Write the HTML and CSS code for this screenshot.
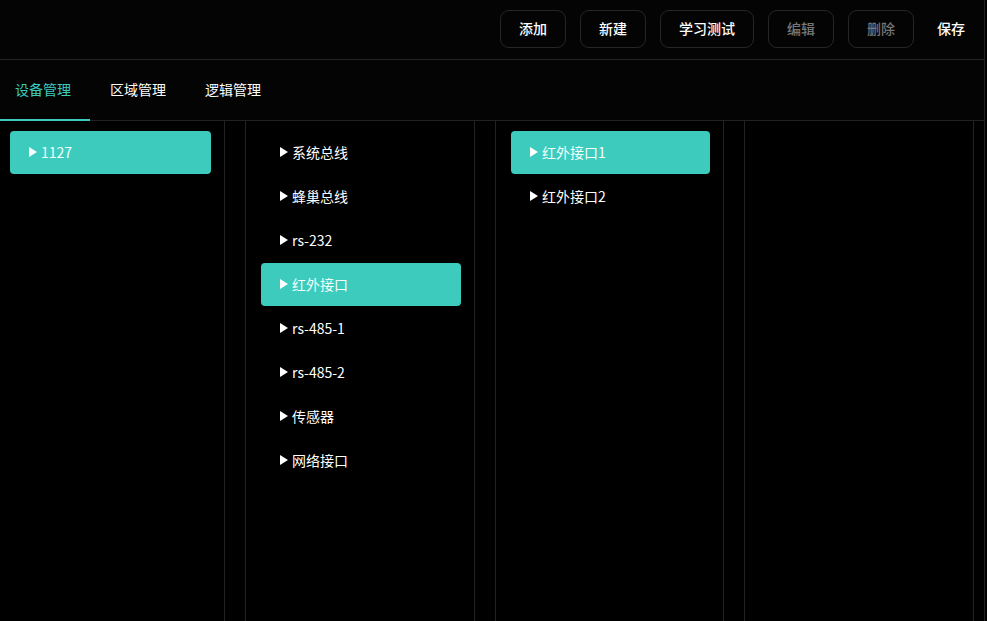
FILE: index.html
```html
<!DOCTYPE html>
<html lang="zh-CN">
<head>
<meta charset="utf-8">
<title>设备管理</title>
<link rel="stylesheet" href="styles.css">
</head>
<body>
<div class="app">
  <header class="toolbar">
    <button class="btn">添加</button>
    <button class="btn">新建</button>
    <button class="btn">学习测试</button>
    <button class="btn btn--disabled">编辑</button>
    <button class="btn btn--disabled">删除</button>
    <button class="btn btn--plain">保存</button>
  </header>
  <nav class="tabs">
    <div class="tab tab--active">设备管理</div>
    <div class="tab">区域管理</div>
    <div class="tab">逻辑管理</div>
  </nav>
  <main class="columns">
    <section class="col col--first">
      <div class="item item--active"><span class="caret"></span>1127</div>
    </section>
    <section class="col">
      <div class="item"><span class="caret"></span>系统总线</div>
      <div class="item"><span class="caret"></span>蜂巢总线</div>
      <div class="item"><span class="caret"></span>rs-232</div>
      <div class="item item--active"><span class="caret"></span>红外接口</div>
      <div class="item"><span class="caret"></span>rs-485-1</div>
      <div class="item"><span class="caret"></span>rs-485-2</div>
      <div class="item"><span class="caret"></span>传感器</div>
      <div class="item"><span class="caret"></span>网络接口</div>
    </section>
    <section class="col col--narrow">
      <div class="item item--active"><span class="caret"></span>红外接口1</div>
      <div class="item"><span class="caret"></span>红外接口2</div>
    </section>
    <section class="col"></section>
  </main>
</div>
</body>
</html>
```
FILE: styles.css
```css
* { box-sizing: border-box; }
html, body {
  margin: 0;
  padding: 0;
  background: #000;
  color: #fff;
  font-family: "Noto Sans CJK SC", "Noto Sans", sans-serif;
  font-size: 14px;
}
.app {
  width: 985px;
  height: 621px;
  border-right: 1px solid #222;
  display: flex;
  flex-direction: column;
  overflow: hidden;
}
.toolbar {
  height: 60px;
  flex: none;
  border-bottom: 1px solid #222;
  background: #040404;
  display: flex;
  align-items: center;
  justify-content: flex-end;
  gap: 14px;
  padding: 0 18px 1px 0;
}
.btn {
  height: 38px;
  padding: 0 18px 2px;
  border: 1px solid #262626;
  border-radius: 9px;
  background: transparent;
  color: #fff;
  font-family: inherit;
  font-size: 14px;
  font-weight: 500;
  cursor: pointer;
}
.btn--disabled { color: #767676; }
.btn--plain {
  border-color: transparent;
  padding: 0 0 2px 8px;
}
.tabs {
  height: 61px;
  flex: none;
  border-bottom: 1px solid #222;
  background: #040404;
  display: flex;
  gap: 5px;
}
.tab {
  padding: 0 19px 2px 15px;
  display: flex;
  align-items: center;
  margin-bottom: -1px;
  border-bottom: 2px solid transparent;
  font-size: 14px;
}
.tab--active {
  color: #3ccbbd;
  border-bottom-color: #3ccbbd;
}
.columns {
  flex: 1;
  display: flex;
  gap: 20px;
  min-height: 0;
}
.col {
  width: 230px;
  flex: none;
  border-left: 1px solid #222;
  border-right: 1px solid #222;
  padding: 10px 13px 0 15px;
}
.col--first {
  width: 225px;
  border-left: none;
  padding-left: 10px;
}
.col--narrow { width: 229px; }
.item {
  height: 43px;
  margin-bottom: 1px;
  border-radius: 4px;
  display: flex;
  align-items: center;
  padding: 0 0 2px 19px;
  color: #fff;
  font-size: 14px;
}
.item--active {
  background: #3ccbbd;
  color: #f2fffd;
}
.caret {
  width: 0;
  height: 0;
  border-top: 5px solid transparent;
  border-bottom: 5px solid transparent;
  border-left: 8px solid #fff;
  margin-right: 4px;
  flex: none;
}
```
